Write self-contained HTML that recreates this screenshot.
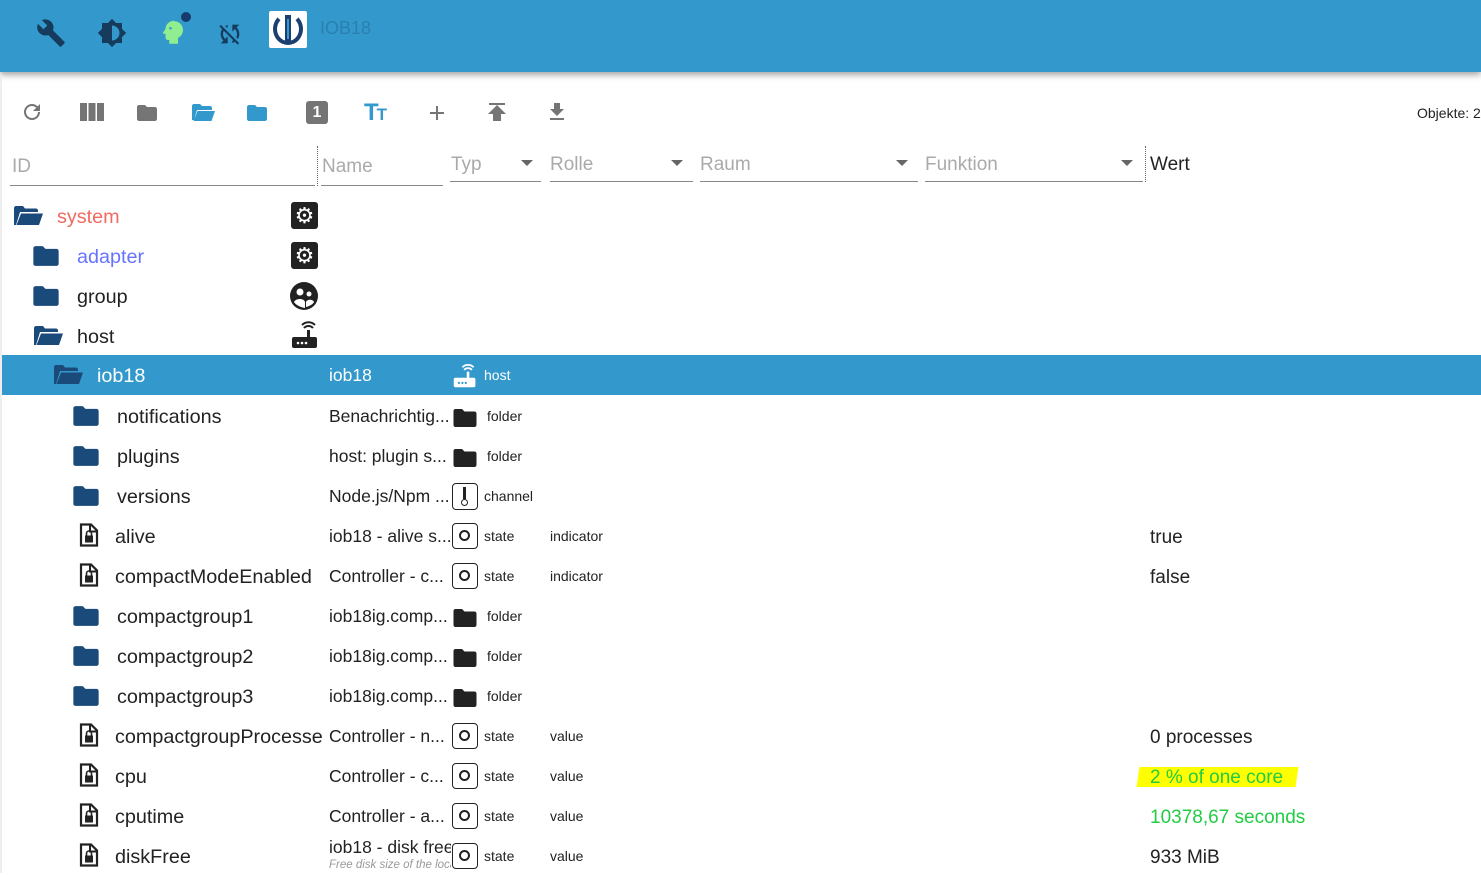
<!DOCTYPE html>
<html><head><meta charset="utf-8"><style>
*{margin:0;padding:0;box-sizing:border-box}
body{width:1481px;height:873px;overflow:hidden;background:#fff;font-family:"Liberation Sans",sans-serif;position:relative;color:#222}
.hdr{position:absolute;left:0;top:0;width:1481px;height:72px;background:#3399cc;box-shadow:0 3px 6px rgba(0,0,0,.35)}
.a{position:absolute}
.row{position:absolute;left:2px;width:1479px;height:40px}
.t{position:absolute;top:10px;font-size:19.8px;white-space:nowrap}
.n{position:absolute;left:327px;top:10px;font-size:17.5px;white-space:nowrap;width:122px;overflow:hidden}
.ty{position:absolute;left:482px;top:12px;font-size:14px}
.ro{position:absolute;left:548px;top:12px;font-size:14px}
.v{position:absolute;left:1148px;top:11px;font-size:19px;white-space:nowrap}
.st{position:absolute;left:450px;top:7px;width:26px;height:26px;border:1.5px solid #222;border-radius:4px}
.st:after{content:"";position:absolute;left:6px;top:6px;width:11px;height:11px;border:2px solid #222;border-radius:50%;box-sizing:border-box}
.flt{position:absolute;font-size:19px;color:#aaa}
.line{position:absolute;height:1px;background:#888}
</style></head><body>
<div class="hdr">
 <svg class="a" style="left:36px;top:18px" width="30" height="30" viewBox="0 0 24 24"><path fill="#163b5c" d="M22.7 19l-9.1-9.1c.9-2.3.4-5-1.5-6.9-2-2-5-2.4-7.4-1.3L9 6 6 9 1.6 4.7C.4 7.1.9 10.1 2.9 12.1c1.9 1.9 4.6 2.4 6.9 1.5l9.1 9.1c.4.4 1 .4 1.4 0l2.3-2.3c.5-.4.5-1.1.1-1.4z"/></svg>
 <svg class="a" style="left:97px;top:18px" width="30" height="30" viewBox="0 0 24 24"><path fill="#163b5c" d="M20 8.69V4h-4.69L12 .69 8.69 4H4v4.69L.69 12 4 15.31V20h4.69L12 23.31 15.31 20H20v-4.690L23.31 12 20 8.69zM12 18V6c3.31 0 6 2.69 6 6s-2.69 6-6 6z"/></svg>
 <svg class="a" style="left:158px;top:16px" width="30" height="32" viewBox="0 0 24 24"><path fill="#90ee90" d="M13 3C9.2 3 6.1 5.8 6 9.5L4 12.5c-.3.4 0 .9.5.9H6v3c0 1.1.9 2 2 2h1v3h7v-4.7c2.4-1.1 4-3.5 4-6.3 0-3.9-3.1-7-7-7z"/><circle cx="10" cy="9" r="1" fill="#3399cc"/></svg>
 <div class="a" style="left:181px;top:12px;width:10px;height:10px;border-radius:50%;background:#163b6c"></div>
 <svg class="a" style="left:216px;top:20px" width="28" height="28" viewBox="0 0 24 24"><path fill="#163b5c" d="M10 6.35V4.26c-.8.21-1.550.54-2.23.96l1.46 1.46c.25-.12.5-.24.77-.33zm-7.14-.94l2.36 2.36C4.45 8.99 4 10.44 4 12c0 2.21.91 4.2 2.36 5.64L4 20h6v-6l-2.24 2.24C6.68 15.15 6 13.66 6 12c0-1 .25-1.94.68-2.77l8.08 8.08c-.25.13-.5.25-.77.34v2.09c.8-.21 1.55-.54 2.23-.96l2.36 2.36 1.27-1.27L4.14 4.14 2.86 5.41zM20 4h-6v6l2.24-2.24C17.32 8.85 18 10.34 18 12c0 1-.25 1.94-.68 2.77l1.46 1.46C19.55 15.01 20 13.56 20 12c0-2.21-.91-4.2-2.36-5.64L20 4z"/></svg>
 <div class="a" style="left:269px;top:11px;width:38px;height:37px;background:#fff;border-radius:2px"></div>
 <div class="a" style="left:273px;top:13px;width:30px;height:32px;border:4px solid #1b3f6e;border-radius:50%;border-top-color:transparent"></div>
 <div class="a" style="left:285px;top:15px;width:6px;height:26px;background:#1b3f6e"></div>
 <div class="a" style="left:287px;top:19px;width:2px;height:20px;background:#3399cc"></div>
 <div class="a" style="left:320px;top:18px;font-size:18px;color:#2a7fb0">IOB18</div>
</div>
<div class="a" style="left:0;top:76px;width:2px;height:797px;background:#eee"></div>
<svg class="a" style="left:20px;top:100px" width="24" height="24" viewBox="0 0 24 24"><path fill="#757575" d="M17.65 6.35A7.96 7.96 0 0012 4a8 8 0 108 8h-2a6 6 0 11-1.76-4.24L13 11h7V4l-2.35 2.35z"/></svg>
<svg class="a" style="left:79px;top:101px" width="26" height="22" viewBox="0 0 26 22"><path fill="#757575" d="M1 2h7v18H1zM9.5 2h7v18h-7zM18 2h7v18h-7z"/></svg>
<svg class="a" style="left:135px;top:101px" width="24" height="24" viewBox="0 0 24 24"><path fill="#757575" d="M10 4H4c-1.1 0-2 .9-2 2v12c0 1.1.9 2 2 2h16c1.1 0 2-.9 2-2V8c0-1.1-.9-2-2-2h-8l-2-2z"/></svg>
<svg class="a" style="left:190px;top:101px" width="26" height="24" viewBox="0 0 26 24"><path fill="#3399cc" d="M2 5c0-1 .8-2 2-2h6l2 2h8c1 0 2 1 2 2v2H7l-3 10H2zM7.5 10H25l-3.5 10H3.5z"/></svg>
<svg class="a" style="left:245px;top:101px" width="24" height="24" viewBox="0 0 24 24"><path fill="#3399cc" d="M10 4H4c-1.1 0-2 .9-2 2v12c0 1.1.9 2 2 2h16c1.1 0 2-.9 2-2V8c0-1.1-.9-2-2-2h-8l-2-2z"/></svg>
<div class="a" style="left:306px;top:101px;width:22px;height:23px;background:#757575;border-radius:3px;color:#fff;font-weight:bold;font-size:16px;text-align:center;line-height:23px">1</div>
<div class="a" style="left:364px;top:99px;color:#3399cc;font-weight:bold;font-size:24px;letter-spacing:-2px">T<span style="font-size:17px">T</span></div>
<svg class="a" style="left:425px;top:101px" width="24" height="24" viewBox="0 0 24 24"><path fill="#757575" d="M19 13h-6v6h-2v-6H5v-2h6V5h2v6h6v2z"/></svg>
<svg class="a" style="left:485px;top:100px" width="24" height="24" viewBox="0 0 24 24"><path fill="#757575" d="M4 3h16v2H4zM8 14H3l9-9 9 9h-5v7H8z"/></svg>
<svg class="a" style="left:545px;top:100px" width="24" height="24" viewBox="0 0 24 24"><path fill="#757575" d="M19 9h-4V3H9v6H5l7 7 7-7zM5 18v2h14v-2H5z"/></svg>
<div class="a" style="left:1417px;top:105px;font-size:14px;white-space:nowrap">Objekte: 2</div>
<div class="flt" style="left:12px;top:156px">ID</div><div class="line" style="left:10px;top:185px;width:305px"></div>
<div class="a" style="left:317px;top:146px;height:40px;border-left:1.5px dotted #666"></div>
<div class="flt" style="left:322px;top:156px">Name</div><div class="line" style="left:321px;top:185px;width:122px"></div>
<div class="flt" style="left:451px;top:154px">Typ</div><div class="line" style="left:450px;top:181px;width:91px"></div>
<div class="flt" style="left:550px;top:154px">Rolle</div><div class="line" style="left:550px;top:181px;width:143px"></div>
<div class="flt" style="left:700px;top:154px">Raum</div><div class="line" style="left:700px;top:181px;width:218px"></div>
<div class="flt" style="left:925px;top:154px">Funktion</div><div class="line" style="left:925px;top:181px;width:218px"></div>
<div class="a" style="left:521px;top:160px;border:6px solid transparent;border-top-color:#666"></div>
<div class="a" style="left:671px;top:160px;border:6px solid transparent;border-top-color:#666"></div>
<div class="a" style="left:896px;top:160px;border:6px solid transparent;border-top-color:#666"></div>
<div class="a" style="left:1121px;top:160px;border:6px solid transparent;border-top-color:#666"></div>
<div class="a" style="left:1145px;top:146px;height:36px;border-left:1.5px dotted #666"></div>
<div class="a" style="left:1150px;top:154px;font-size:19px">Wert</div>

<svg width="0" height="0" style="position:absolute"><defs>
<symbol id="fc" viewBox="0 0 24 20"><path d="M9 1H2.5C1.3 1 .5 2 .5 3v14c0 1.1.8 2 2 2h19c1.1 0 2-.9 2-2V5.5c0-1.1-.9-2-2-2h-10z"/></symbol>
<symbol id="fo" viewBox="0 0 30 22"><path d="M1 3c0-1 1-2 2-2h7l2 2.5h11c1 0 2 1 2 2V7H7L3 20H1zM8 8.5h22L26 20H3.5z"/></symbol>
<symbol id="fl" viewBox="0 0 20 24"><path fill="none" stroke="#222" stroke-width="2.2" d="M2 1.5h10l6 6V22.5H2z"/><path d="M11 1.5v7h7" fill="none" stroke="#222" stroke-width="2"/><rect x="6" y="12.5" width="8" height="7" fill="#222"/><path d="M7.5 12.5v-2a2.5 2.5 0 015 0v2" fill="none" stroke="#222" stroke-width="1.6"/></symbol>
<symbol id="bf" viewBox="0 0 24 20"><path fill="#222" d="M9 1H2.5C1.3 1 .5 2 .5 3v14c0 1.1.8 2 2 2h19c1.1 0 2-.9 2-2V5.5c0-1.1-.9-2-2-2h-10z"/></symbol>
</defs></svg>

<div class="row" style="top:196px">
 <svg class="a" style="left:10px;top:9px;fill:#1a4a7a" width="32" height="22"><use href="#fo"/></svg>
 <div class="t" style="left:55px;color:#f06a5f">system</div>
 <div class="a" style="left:289px;top:6px;width:27px;height:27px;background:#222;border-radius:3px;color:#fff;font-size:22px;text-align:center;line-height:27px">⚙</div>
</div>
<div class="row" style="top:236px">
 <svg class="a" style="left:30px;top:9px;fill:#1a4a7a" width="28" height="22"><use href="#fc"/></svg>
 <div class="t" style="left:75px;color:#6673ff">adapter</div>
 <div class="a" style="left:289px;top:6px;width:27px;height:27px;background:#222;border-radius:3px;color:#fff;font-size:22px;text-align:center;line-height:27px">⚙</div>
</div>
<div class="row" style="top:276px">
 <svg class="a" style="left:30px;top:9px;fill:#1a4a7a" width="28" height="22"><use href="#fc"/></svg>
 <div class="t" style="left:75px">group</div>
 <svg class="a" style="left:287px;top:5px" width="30" height="30" viewBox="0 0 30 30"><circle cx="15" cy="15" r="14" fill="#222"/><circle cx="11" cy="11" r="3.5" fill="#fff"/><circle cx="20" cy="13" r="2.5" fill="#fff"/><path d="M5 21c2-4 10-4 11 0v6c-5-1-9-3-11-6zM17 21c1-3 7-3 8 0-1 2-4 4-8 5z" fill="#fff"/></svg>
</div>
<div class="row" style="top:316px">
 <svg class="a" style="left:30px;top:9px;fill:#1a4a7a" width="32" height="22"><use href="#fo"/></svg>
 <div class="t" style="left:75px">host</div>
 <svg class="a" style="left:288px;top:4px" width="30" height="30" viewBox="0 0 30 30"><rect x="2" y="17" width="25" height="11" rx="2" fill="#222"/><rect x="17" y="10" width="3" height="8" fill="#222"/><path d="M14 8a6 6 0 019 0M12 5a9 9 0 0113 0" stroke="#222" stroke-width="2" fill="none"/><circle cx="8" cy="23" r="1.3" fill="#fff"/><circle cx="12" cy="23" r="1.3" fill="#fff"/><circle cx="16" cy="23" r="1.3" fill="#fff"/></svg>
</div>
<div class="row" style="top:355px;background:#3399cc;color:#fff">
 <svg class="a" style="left:50px;top:9px;fill:#1a4a7a" width="32" height="22"><use href="#fo"/></svg>
 <div class="t" style="left:95px">iob18</div>
 <div class="n" style="color:#fff">iob18</div>
 <svg class="a" style="left:450px;top:8px" width="26" height="26" viewBox="0 0 30 30"><rect x="2" y="17" width="25" height="11" rx="2" fill="#fff"/><rect x="17" y="10" width="3" height="8" fill="#fff"/><path d="M14 8a6 6 0 019 0M12 5a9 9 0 0113 0" stroke="#fff" stroke-width="2" fill="none"/><circle cx="8" cy="23" r="1.3" fill="#3399cc"/><circle cx="12" cy="23" r="1.3" fill="#3399cc"/><circle cx="16" cy="23" r="1.3" fill="#3399cc"/></svg>
 <div class="ty" style="color:#fff">host</div>
</div>

<div class="row" style="top:396px"><svg class="a" style="left:70px;top:9px;fill:#1a4a7a" width="28" height="22"><use href="#fc"/></svg><div class="t" style="left:115px">notifications</div><div class="n">Benachrichtig...</div><svg class="a" style="left:451px;top:12px" width="24" height="20"><use href="#bf"/></svg><div class="ty" style="left:485px">folder</div></div>
<div class="row" style="top:436px"><svg class="a" style="left:70px;top:9px;fill:#1a4a7a" width="28" height="22"><use href="#fc"/></svg><div class="t" style="left:115px">plugins</div><div class="n">host: plugin s...</div><svg class="a" style="left:451px;top:12px" width="24" height="20"><use href="#bf"/></svg><div class="ty" style="left:485px">folder</div></div>
<div class="row" style="top:476px"><svg class="a" style="left:70px;top:9px;fill:#1a4a7a" width="28" height="22"><use href="#fc"/></svg><div class="t" style="left:115px">versions</div><div class="n">Node.js/Npm ...</div><div class="a" style="left:450px;top:7px;width:26px;height:27px;border:1.5px solid #222;border-radius:4px"><div class="a" style="left:10px;top:3px;width:3px;height:12px;background:#222"></div><div class="a" style="left:8px;top:15px;width:7px;height:7px;border:1.5px solid #222;border-radius:50%"></div></div><div class="ty">channel</div></div>
<div class="row" style="top:516px"><svg class="a" style="left:77px;top:7px;fill:#222" width="20" height="24"><use href="#fl"/></svg><div class="t" style="left:113px">alive</div><div class="n">iob18 - alive s...</div><div class="st"></div><div class="ty">state</div><div class="ro">indicator</div><div class="v">true</div></div>
<div class="row" style="top:556px"><svg class="a" style="left:77px;top:7px;fill:#222" width="20" height="24"><use href="#fl"/></svg><div class="t" style="left:113px">compactModeEnabled</div><div class="n">Controller - c...</div><div class="st"></div><div class="ty">state</div><div class="ro">indicator</div><div class="v">false</div></div>
<div class="row" style="top:596px"><svg class="a" style="left:70px;top:9px;fill:#1a4a7a" width="28" height="22"><use href="#fc"/></svg><div class="t" style="left:115px">compactgroup1</div><div class="n">iob18ig.comp...</div><svg class="a" style="left:451px;top:12px" width="24" height="20"><use href="#bf"/></svg><div class="ty" style="left:485px">folder</div></div>
<div class="row" style="top:636px"><svg class="a" style="left:70px;top:9px;fill:#1a4a7a" width="28" height="22"><use href="#fc"/></svg><div class="t" style="left:115px">compactgroup2</div><div class="n">iob18ig.comp...</div><svg class="a" style="left:451px;top:12px" width="24" height="20"><use href="#bf"/></svg><div class="ty" style="left:485px">folder</div></div>
<div class="row" style="top:676px"><svg class="a" style="left:70px;top:9px;fill:#1a4a7a" width="28" height="22"><use href="#fc"/></svg><div class="t" style="left:115px">compactgroup3</div><div class="n">iob18ig.comp...</div><svg class="a" style="left:451px;top:12px" width="24" height="20"><use href="#bf"/></svg><div class="ty" style="left:485px">folder</div></div>
<div class="row" style="top:716px"><svg class="a" style="left:77px;top:7px;fill:#222" width="20" height="24"><use href="#fl"/></svg><div class="t" style="left:113px">compactgroupProcesse</div><div class="n">Controller - n...</div><div class="st"></div><div class="ty">state</div><div class="ro">value</div><div class="v">0 processes</div></div>
<div class="row" style="top:756px"><svg class="a" style="left:77px;top:7px;fill:#222" width="20" height="24"><use href="#fl"/></svg><div class="t" style="left:113px">cpu</div><div class="n">Controller - c...</div><div class="st"></div><div class="ty">state</div><div class="ro">value</div><div class="a" style="left:1136px;top:11px;width:159px;height:20px;background:#ffff00;transform:skewX(-8deg)"></div><div class="v" style="color:#22cc44">2 % of one core</div></div>
<div class="row" style="top:796px"><svg class="a" style="left:77px;top:7px;fill:#222" width="20" height="24"><use href="#fl"/></svg><div class="t" style="left:113px">cputime</div><div class="n">Controller - a...</div><div class="st"></div><div class="ty">state</div><div class="ro">value</div><div class="v" style="color:#22cc44">10378,67 seconds</div></div>
<div class="row" style="top:836px"><svg class="a" style="left:77px;top:7px;fill:#222" width="20" height="24"><use href="#fl"/></svg><div class="t" style="left:113px">diskFree</div><div class="n" style="top:1px">iob18 - disk free</div><div class="a" style="left:327px;top:23px;font-size:11.5px;font-style:italic;color:#999;width:122px;overflow:hidden;white-space:nowrap">Free disk size of the local</div><div class="st"></div><div class="ty">state</div><div class="ro">value</div><div class="v">933 MiB</div></div>
</body></html>
